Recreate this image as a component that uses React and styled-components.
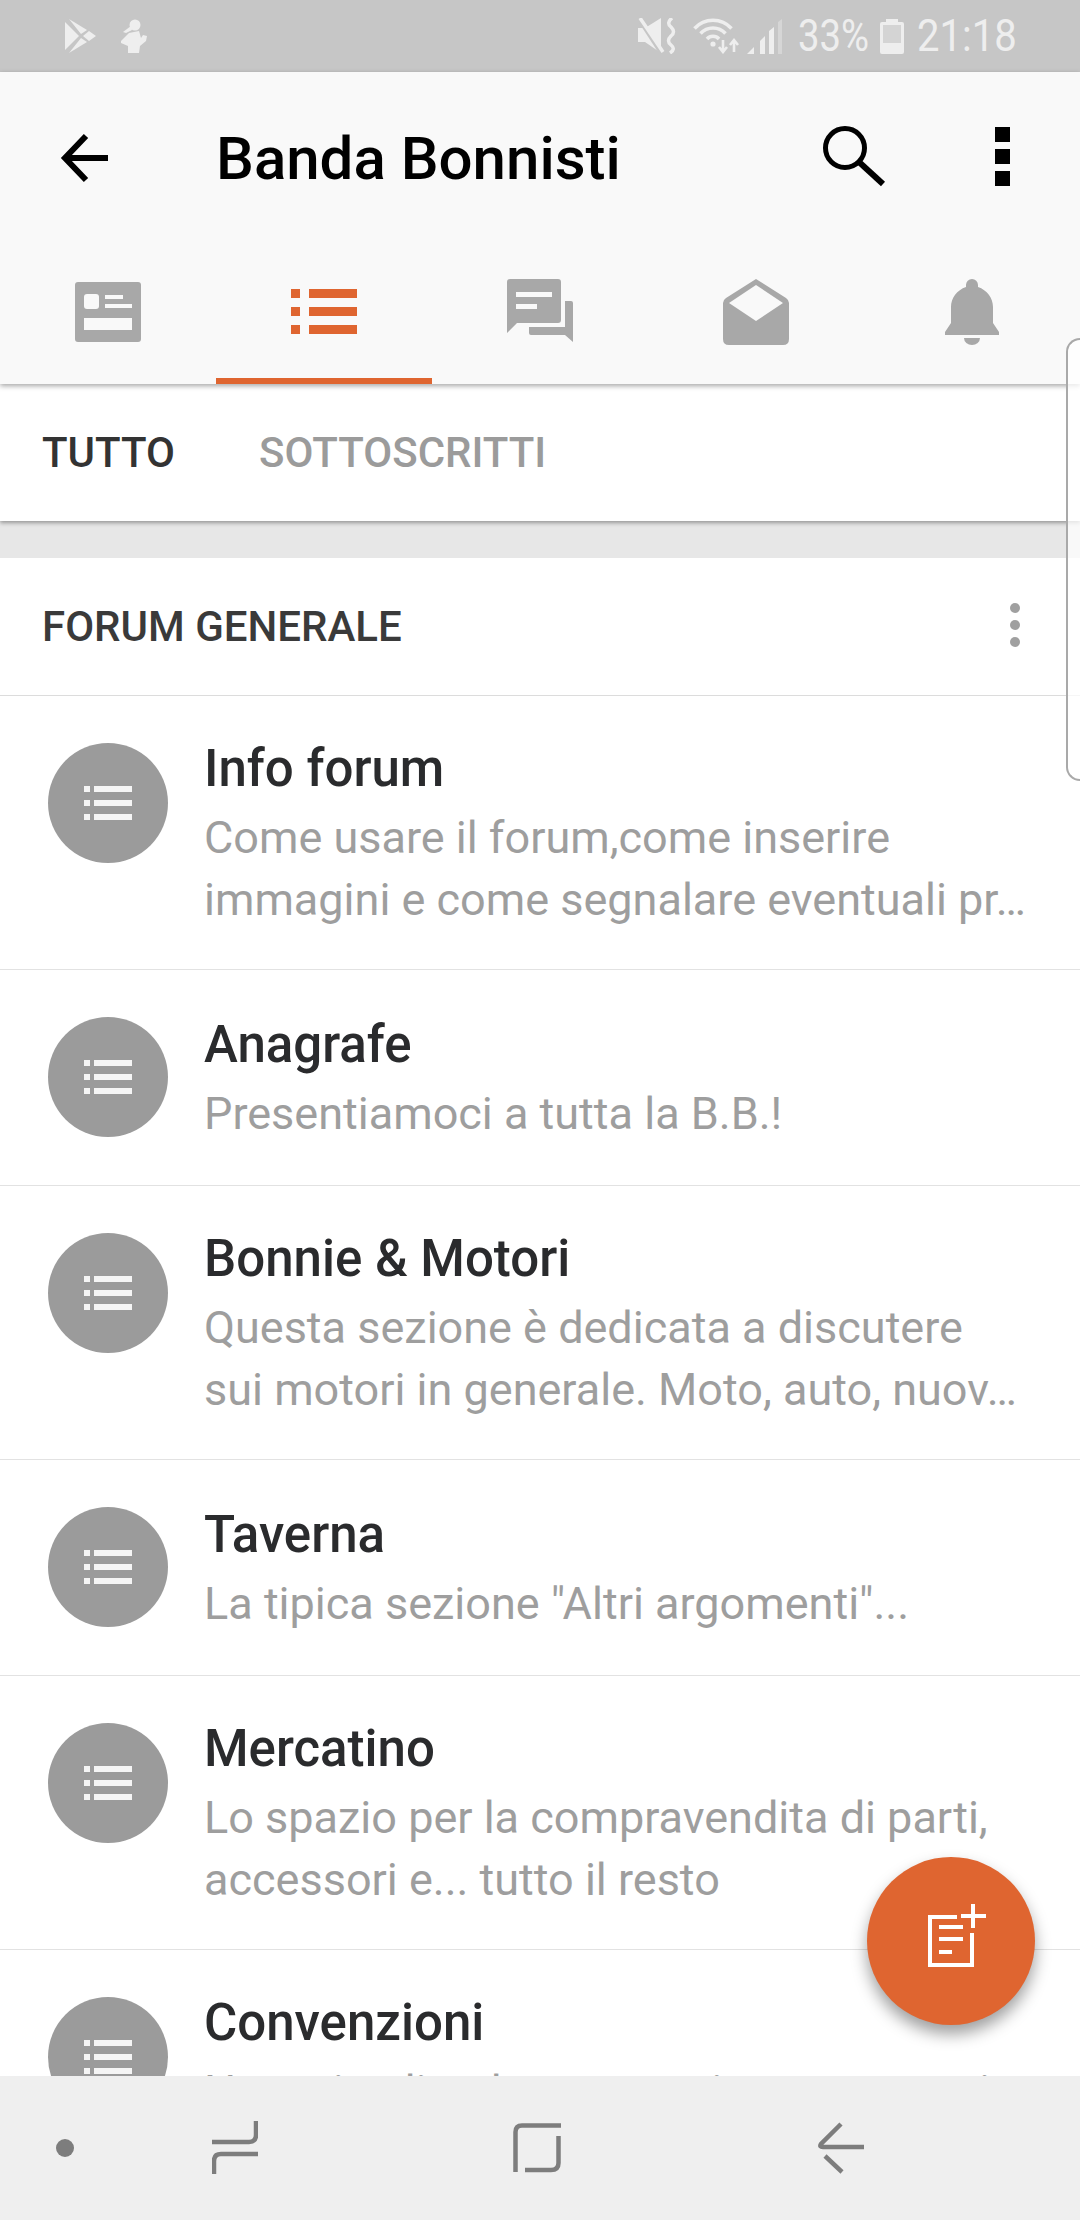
import React from "react";
import styled, { createGlobalStyle } from "styled-components";

const GlobalStyle = createGlobalStyle`
    html, body {
        margin: 0;
        padding: 0;
        background: #ffffff;
    }
    * {
        box-sizing: border-box;
    }
`
const Page = styled.div`
    position: relative;
    width: 1080px;
    height: 2220px;
    display: flex;
    flex-direction: column;
    overflow: hidden;
    font-family: Roboto, "Liberation Sans", sans-serif;
    background: #ffffff;
`
const StatusBar = styled.div`
    flex: none;
    height: 72px;
    display: flex;
    align-items: center;
    justify-content: space-between;
    padding: 0 67px 0 65px;
    background: #c6c6c6;
    color: #eeeeee;
`
const StatusGroup = styled.div`
    display: flex;
    align-items: center;
`
const StatusIcon = styled.svg`
    display: block;
    margin-left: ${(p) => p.$ml || 0}px;
`
const StatusText = styled.div`
    width: ${(p) => p.$w}px;
    margin-left: ${(p) => p.$ml}px;
    font-size: 45px;
    font-weight: 400;
    line-height: 72px;
    white-space: nowrap;
    transform: scaleX(${(p) => p.$sx});
    transform-origin: left center;
`
const Header = styled.header`
    flex: none;
    position: relative;
    z-index: 3;
    background: #f9f9f9;
    box-shadow: 0 2px 5px rgba(0, 0, 0, 0.35);
`
const Toolbar = styled.div`
    height: 174px;
    display: flex;
    align-items: center;
    padding: 0 70px 0 60px;
`
const Title = styled.h1`
    flex: 1;
    margin: 0 0 2px 102px;
    font-size: 60px;
    font-weight: 500;
    color: #000000;
`
const SearchButton = styled.svg`
    display: block;
    margin: 0 108px 4px 0;
`
const MenuSquares = styled.div`
    display: flex;
    flex-direction: column;
    gap: 7px;
    margin-bottom: 6px;
    span {
        display: block;
        width: 15px;
        height: 15px;
        background: #000000;
    }
`
const TabBar = styled.nav`
    height: 138px;
    display: flex;
`
const Tab = styled.div`
    flex: 1;
    display: grid;
    place-items: center;
    border-bottom: 6px solid ${(p) => (p.$active ? "#df6530" : "transparent")};
`
const SubTabs = styled.div`
    flex: none;
    position: relative;
    z-index: 2;
    height: 137px;
    display: flex;
    align-items: center;
    column-gap: 84px;
    padding-left: 42px;
    background: #ffffff;
    box-shadow: 0 2px 4px rgba(0, 0, 0, 0.35);
`
const SubTab = styled.div`
    font-size: 42px;
    font-weight: 500;
    color: ${(p) => (p.$active ? "#333333" : "#9b9b9b")};
`
const Band = styled.div`
    flex: none;
    height: 37px;
    background: #e7e7e7;
`
const SectionHead = styled.div`
    flex: none;
    height: 138px;
    display: flex;
    align-items: center;
    justify-content: space-between;
    padding: 0 60px 0 42px;
    border-bottom: 1px solid #dcdcdc;
`
const SectionTitle = styled.div`
    font-size: 42px;
    font-weight: 500;
    color: #3a3a3a;
`
const SectionMenu = styled.div`
    display: flex;
    flex-direction: column;
    gap: 7px;
    margin-bottom: 3px;
    span {
        display: block;
        width: 10px;
        height: 10px;
        border-radius: 50%;
        background: #a0a0a0;
    }
`
const List = styled.div`
    flex: 1;
    min-height: 0;
    overflow: hidden;
`
const Row = styled.div`
    display: flex;
    align-items: flex-start;
    padding: 0 50px 0 48px;
    border-bottom: 1px solid #e2e2e2;
`
const Circle = styled.div`
    flex: none;
    width: 120px;
    height: 120px;
    margin: 47px 0 48px;
    border-radius: 50%;
    display: grid;
    place-items: center;
    background: #9b9b9b;
`
const RowText = styled.div`
    flex: 1;
    min-width: 0;
    align-self: center;
    margin-left: 36px;
    padding: 42px 0 38px;
`
const RowTitle = styled.div`
    margin-bottom: 7px;
    font-size: 51px;
    font-weight: 500;
    line-height: 62px;
    color: #2a2b2d;
`
const RowDesc = styled.div`
    display: -webkit-box;
    -webkit-box-orient: vertical;
    -webkit-line-clamp: 2;
    overflow: hidden;
    font-size: 45px;
    line-height: 62px;
    color: #9e9e9e;
`
const NavBar = styled.div`
    flex: none;
    position: relative;
    z-index: 2;
    height: 144px;
    display: grid;
    grid-template-columns: 156px 301px 305px auto;
    align-items: center;
    padding-left: 56px;
    background: #efefef;
`
const NavDot = styled.div`
    width: 18px;
    height: 18px;
    border-radius: 50%;
    background: #7d7d7d;
`
const Fab = styled.div`
    position: absolute;
    z-index: 1;
    left: 867px;
    top: 1857px;
    width: 168px;
    height: 168px;
    border-radius: 50%;
    background: #df6530;
    box-shadow: 0 9px 16px rgba(0, 0, 0, 0.38);
`
const EdgeHandle = styled.div`
    position: absolute;
    z-index: 4;
    right: 0;
    top: 338px;
    width: 14px;
    height: 443px;
    border: 2px solid #a9a9a9;
    border-right: none;
    border-radius: 16px 0 0 16px;
    background: rgba(255, 255, 255, 0.75);
`

const forums = [
    { title: "Info forum", desc: "Come usare il forum,come inserire immagini e come segnalare eventuali pr…" },
    { title: "Anagrafe", desc: "Presentiamoci a tutta la B.B.!" },
    { title: "Bonnie & Motori", desc: ["Questa sezione è dedicata a discutere", <br key="br" />, "sui motori in generale. Moto, auto, nuov…"] },
    { title: "Taverna", desc: 'La tipica sezione "Altri argomenti"...' },
    { title: "Mercatino", desc: "Lo spazio per la compravendita di parti, accessori e... tutto il resto" },
    { title: "Convenzioni", desc: "Negozi e ditte legate a noi con vantaggi e offerte" },
];

function PlayIcon() {
    return (
        <StatusIcon width="31" height="34" viewBox="0 0 31 34" fill="#eeeeee">
            <path d="M0 3 L14 17 L0 31z" />
            <path d="M4 0 L22 11 L16 15z" />
            <path d="M4 34 L22 23 L16 19z" />
            <path d="M24 12 L31 17 L24 22 L18 17z" />
        </StatusIcon>
    )
}

function RunnerIcon() {
    return (
        <StatusIcon $ml={24} width="27" height="34" viewBox="0 0 27 34" fill="#eeeeee">
            <circle cx="15" cy="6" r="5.5" />
            <path d="M3 13 L11 7 L12 11 L6 14z" />
            <path d="M9 14 L19 12 L21 19 L23 16 L27 17 L26 22 L20 27 L19 34 H8 L8 27 L1 24 L1 22z" />
        </StatusIcon>
    )
}

function MuteIcon() {
    return (
        <StatusIcon width="38" height="36" viewBox="0 0 38 36">
            <path d="M0 10 H7 L23 0 V35 L7 24 H0z" fill="#eeeeee" />
            <path d="M-1 -2 L23 35" stroke="#c6c6c6" strokeWidth="4" />
            <path d="M2 0 L25 34" stroke="#eeeeee" strokeWidth="3.5" />
            <path d="M34 0 Q28 5 33 9 Q38 14 33 18 Q28 23 33 27 Q38 31 32 35" fill="none" stroke="#eeeeee" strokeWidth="3.5" />
        </StatusIcon>
    )
}

function WifiIcon() {
    return (
        <StatusIcon $ml={17} width="47" height="36" viewBox="0 0 47 36" fill="none" stroke="#eeeeee" strokeWidth="3.5">
            <path d="M1.5 10.5 A25 25 0 0 1 38.5 10.5" />
            <path d="M7.5 15.5 A17 17 0 0 1 32.5 15.5" />
            <path d="M14 21 A8 8 0 0 1 26 21" />
            <circle cx="20" cy="26" r="2.6" fill="#eeeeee" stroke="none" />
            <path d="M30 22 V34 M26 29 L30 34 L34 29" strokeWidth="2.6" />
            <path d="M41 34 V22 M37 27 L41 22 L45 27" strokeWidth="2.6" />
        </StatusIcon>
    )
}

function SignalIcon() {
    return (
        <StatusIcon $ml={7} width="35" height="35" viewBox="0 0 35 35" fill="#eeeeee">
            <path d="M0 35 L7 28 V35z" />
            <path d="M13 22 L18 17 V35 H13z" />
            <path d="M22 12 L27 8 V35 H22z" />
            <path d="M31 3 L35 0 V35 H31z" opacity="0.4" />
        </StatusIcon>
    )
}

function BatteryIcon() {
    return (
        <StatusIcon $ml={13} width="24" height="35" viewBox="0 0 24 35">
            <path d="M6 0 H18 V3 H22 Q24 3 24 5 V33 Q24 35 22 35 H2 Q0 35 0 33 V5 Q0 3 2 3 H6z" fill="#eeeeee" />
            <rect x="3" y="6" width="18" height="18" fill="#d4d4d4" />
        </StatusIcon>
    )
}

function TabIcon({ children }) {
    return <svg width="66" height="66" viewBox="0 0 66 66" fill="#a8a8a8">{children}</svg>
}

function ListGlyph() {
    return (
        <svg width="48" height="34" viewBox="0 0 48 34" fill="#f5f5f5">
            <rect x="0" y="0" width="6" height="6" />
            <rect x="10" y="0" width="38" height="6" />
            <rect x="0" y="14" width="6" height="6" />
            <rect x="10" y="14" width="38" height="6" />
            <rect x="0" y="28" width="6" height="6" />
            <rect x="10" y="28" width="38" height="6" />
        </svg>
    )
}

export default function App() {
    return (
        <Page>
            <GlobalStyle />
            <StatusBar>
                <StatusGroup>
                    <PlayIcon />
                    <RunnerIcon />
                </StatusGroup>
                <StatusGroup>
                    <MuteIcon />
                    <WifiIcon />
                    <SignalIcon />
                    <StatusText $w={69} $ml={16} $sx={0.85}>33%</StatusText>
                    <BatteryIcon />
                    <StatusText $w={96} $ml={13} $sx={0.89}>21:18</StatusText>
                </StatusGroup>
            </StatusBar>

            <Header>
                <Toolbar>
                    <svg width="54" height="54" viewBox="0 0 54 54" fill="none" stroke="#000000" strokeWidth="6">
                        <path d="M26 4 L5 26 L26 48" />
                        <path d="M5 26 H48" />
                    </svg>
                    <Title>Banda Bonnisti</Title>
                    <SearchButton width="66" height="66" viewBox="0 0 66 66" fill="none" stroke="#000000">
                        <circle cx="24" cy="24" r="19.5" strokeWidth="5" />
                        <path d="M38 38 L62 60" strokeWidth="6" />
                    </SearchButton>
                    <MenuSquares>
                        <span />
                        <span />
                        <span />
                    </MenuSquares>
                </Toolbar>
                <TabBar>
                    <Tab>
                        <TabIcon>
                            <rect x="0" y="3" width="66" height="60" rx="3" />
                            <g fill="#f9f9f9">
                                <rect x="9" y="15" width="15" height="15" rx="3" />
                                <rect x="30" y="16" width="18" height="4" />
                                <rect x="30" y="25" width="27" height="4" />
                                <rect x="9" y="39" width="48" height="12" />
                            </g>
                        </TabIcon>
                    </Tab>
                    <Tab $active>
                        <TabIcon>
                            <g fill="#df6530">
                                <rect x="0" y="10" width="9" height="9" />
                                <rect x="18" y="10" width="48" height="9" />
                                <rect x="0" y="28" width="9" height="9" />
                                <rect x="18" y="28" width="48" height="9" />
                                <rect x="0" y="46" width="9" height="9" />
                                <rect x="18" y="46" width="48" height="9" />
                            </g>
                        </TabIcon>
                    </Tab>
                    <Tab>
                        <TabIcon>
                            <path d="M3 0 H51 Q54 0 54 3 V41 Q54 44 51 44 H10 L0 54 V3 Q0 0 3 0z" />
                            <path d="M58 22 H64 Q66 22 66 24 V63 L58 56 H24 Q22 56 22 54 V48 H58z" />
                            <g fill="#f9f9f9">
                                <rect x="9" y="13" width="36" height="5" />
                                <rect x="9" y="25" width="21" height="5" />
                            </g>
                        </TabIcon>
                    </Tab>
                    <Tab>
                        <TabIcon>
                            <path
                                fillRule="evenodd"
                                d="M33 0 L63 19 Q66 21 66 24 V60 Q66 66 60 66 H6 Q0 66 0 60 V24 Q0 21 3 19z M6 24 L33 42 L60 24 L33 6z"
                            />
                        </TabIcon>
                    </Tab>
                    <Tab>
                        <TabIcon>
                            <path d="M27 8 V6 A6 6 0 0 1 39 6 V8 C48 11 54 19 54 28 V44 L60 53 V56 H6 V53 L12 44 V28 C12 19 18 11 27 8z" />
                            <path d="M25 59 H41 A8 7 0 0 1 25 59z" />
                        </TabIcon>
                    </Tab>
                </TabBar>
            </Header>

            <SubTabs>
                <SubTab $active>TUTTO</SubTab>
                <SubTab>SOTTOSCRITTI</SubTab>
            </SubTabs>
            <Band />

            <SectionHead>
                <SectionTitle>FORUM GENERALE</SectionTitle>
                <SectionMenu>
                    <span />
                    <span />
                    <span />
                </SectionMenu>
            </SectionHead>

            <List>
                {forums.map((f) => (
                    <Row key={f.title}>
                        <Circle>
                            <ListGlyph />
                        </Circle>
                        <RowText>
                            <RowTitle>{f.title}</RowTitle>
                            <RowDesc>{f.desc}</RowDesc>
                        </RowText>
                    </Row>
                ))}
            </List>

            <NavBar>
                <NavDot />
                <svg width="46" height="54" viewBox="0 0 46 54" fill="none" stroke="#7d7d7d" strokeWidth="4.5">
                    <path d="M0 21 H37 Q44 21 44 14 V0" />
                    <path d="M46 33 H9 Q2 33 2 40 V53" />
                </svg>
                <svg width="48" height="50" viewBox="0 0 48 50" fill="none" stroke="#7d7d7d" strokeWidth="4.5">
                    <path d="M48 2.5 H9 Q2.5 2.5 2.5 9 V49" />
                    <path d="M45.5 13 V40 Q45.5 47 38 47 H12" />
                </svg>
                <svg width="46" height="52" viewBox="0 0 46 52" fill="none" stroke="#7d7d7d" strokeWidth="4.5">
                    <path d="M23 2 L3 22 Q1 25 5 25 H46" />
                    <path d="M7 34 L24 50" />
                </svg>
            </NavBar>

            <Fab>
                <svg width="168" height="168" viewBox="0 0 168 168" fill="none" stroke="#ffffff" strokeWidth="4">
                    <path d="M90 60 H63 V108 H105 V76" />
                    <path d="M94 59 H119 M106 47 V71" />
                    <path d="M72 70 H96 M72 82 H96 M72 95 H85" />
                </svg>
            </Fab>
            <EdgeHandle />
        </Page>
    )
}
